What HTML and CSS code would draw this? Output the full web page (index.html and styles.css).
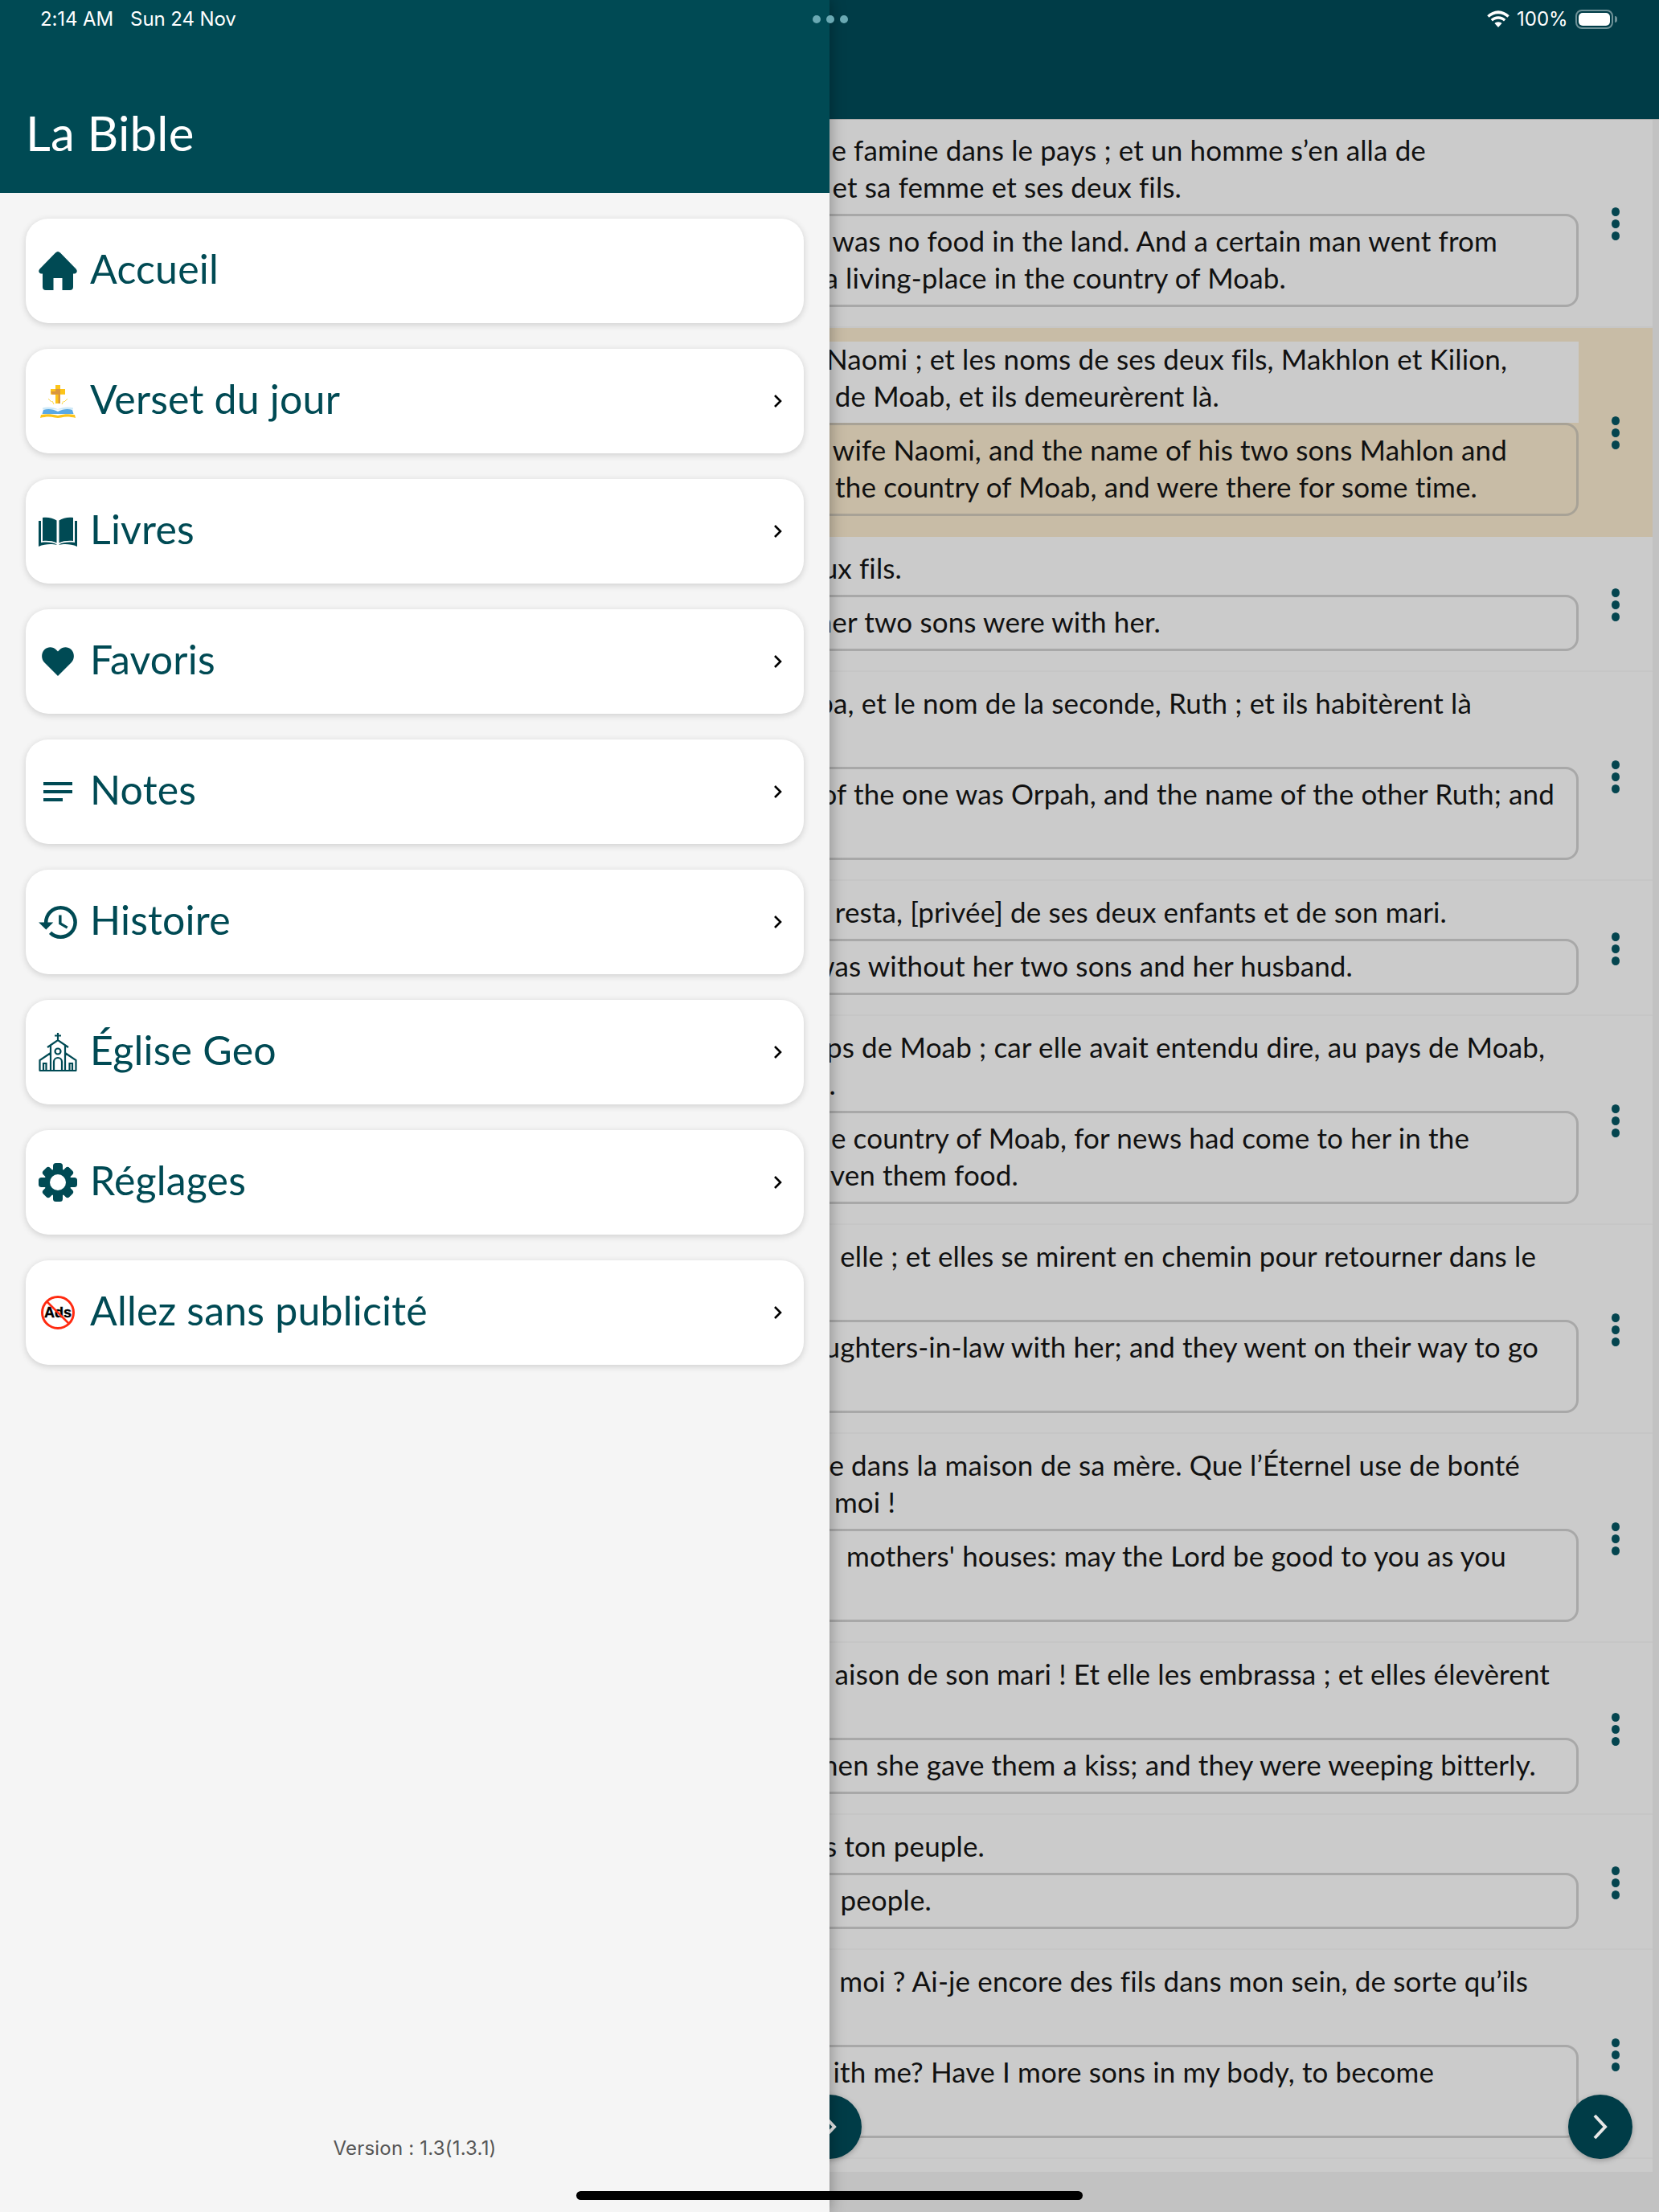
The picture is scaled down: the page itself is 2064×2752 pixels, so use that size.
FILE: index.html
```html
<!DOCTYPE html>
<html lang="fr">
<head>
<meta charset="utf-8">
<title>La Bible</title>
<link rel="stylesheet" href="styles.css">
</head>
<body>
<div class="screen">
  <header class="topbar">
    <div class="status-right">
      <svg class="wifi" viewBox="2 1 24 18"><path d="M14 4.6c3.800 0 7.200 1.500 9.800 3.900l2-2.100C22.400 3.200 18.400 1.200 14 1.200S5.600 3.200 2.200 6.400l2 2.100C6.800 6.100 10.200 4.600 14 4.600z"/><path d="M14 10.200c2.300 0 4.400.9 6 2.400l2-2.100c-2.100-2-4.900-3.300-8-3.300s-5.900 1.300-8 3.300l2 2.100c1.600-1.500 3.700-2.400 6-2.400z"/><path d="M14 13.200c-1.500 0-2.900.6-3.900 1.500L14 19l3.900-4.300c-1-.9-2.400-1.500-3.900-1.500z"/></svg>
      <span class="pct">100%</span>
      <span class="battery"><span class="battery-fill"></span></span>
      <span class="battery-nub"></span>
    </div>
  </header>

  <main class="verses">
    <section class="row"><div class="body">
      <div class="fr"><div class="ln v1a">e famine dans le pays ; et un homme s’en alla de</div><div class="ln v1b">et sa femme et ses deux fils.</div></div>
      <div class="en"><div class="ln v1c">was no food in the land. And a certain man went from</div><div class="ln v1d">a living-place in the country of Moab.</div></div>
    </div><div class="kebab"><i></i><i></i><i></i></div></section>

    <section class="row active"><div class="body">
      <div class="fr"><div class="ln v2a">Naomi ; et les noms de ses deux fils, Makhlon et Kilion,</div><div class="ln v2b">de Moab, et ils demeurèrent là.</div></div>
      <div class="en"><div class="ln v2c">wife Naomi, and the name of his two sons Mahlon and</div><div class="ln v2d">the country of Moab, and were there for some time.</div></div>
    </div><div class="kebab"><i></i><i></i><i></i></div></section>

    <section class="row"><div class="body">
      <div class="fr"><div class="ln v3a">ux fils.</div></div>
      <div class="en"><div class="ln v3c">her two sons were with her.</div></div>
    </div><div class="kebab"><i></i><i></i><i></i></div></section>

    <section class="row"><div class="body">
      <div class="fr"><div class="ln v4a">pa, et le nom de la seconde, Ruth ; et ils habitèrent là</div><div class="ln"></div></div>
      <div class="en"><div class="ln v4c">of the one was Orpah, and the name of the other Ruth; and</div><div class="ln"></div></div>
    </div><div class="kebab"><i></i><i></i><i></i></div></section>

    <section class="row"><div class="body">
      <div class="fr"><div class="ln v5a">resta, [privée] de ses deux enfants et de son mari.</div></div>
      <div class="en"><div class="ln v5c">was without her two sons and her husband.</div></div>
    </div><div class="kebab"><i></i><i></i><i></i></div></section>

    <section class="row"><div class="body">
      <div class="fr"><div class="ln v6a">ps de Moab ; car elle avait entendu dire, au pays de Moab,</div><div class="ln v6b">.</div></div>
      <div class="en"><div class="ln v6c">he country of Moab, for news had come to her in the</div><div class="ln v6d">ven them food.</div></div>
    </div><div class="kebab"><i></i><i></i><i></i></div></section>

    <section class="row"><div class="body">
      <div class="fr"><div class="ln v7a">elle ; et elles se mirent en chemin pour retourner dans le</div><div class="ln"></div></div>
      <div class="en"><div class="ln v7c">ughters-in-law with her; and they went on their way to go</div><div class="ln"></div></div>
    </div><div class="kebab"><i></i><i></i><i></i></div></section>

    <section class="row"><div class="body">
      <div class="fr"><div class="ln v8a">e dans la maison de sa mère. Que l’Éternel use de bonté</div><div class="ln v8b">moi !</div></div>
      <div class="en"><div class="ln v8c">mothers' houses: may the Lord be good to you as you</div><div class="ln"></div></div>
    </div><div class="kebab"><i></i><i></i><i></i></div></section>

    <section class="row"><div class="body">
      <div class="fr"><div class="ln v9a">aison de son mari ! Et elle les embrassa ; et elles élevèrent</div><div class="ln"></div></div>
      <div class="en"><div class="ln v9c">hen she gave them a kiss; and they were weeping bitterly.</div></div>
    </div><div class="kebab"><i></i><i></i><i></i></div></section>

    <section class="row"><div class="body">
      <div class="fr"><div class="ln v10a">s ton peuple.</div></div>
      <div class="en"><div class="ln v10c">people.</div></div>
    </div><div class="kebab"><i></i><i></i><i></i></div></section>

    <section class="row"><div class="body">
      <div class="fr"><div class="ln v11a">moi ? Ai-je encore des fils dans mon sein, de sorte qu’ils</div><div class="ln"></div></div>
      <div class="en"><div class="ln v11c">ith me? Have I more sons in my body, to become</div><div class="ln"></div></div>
    </div><div class="kebab"><i></i><i></i><i></i></div></section>
    <div class="list-end"></div>
  </main>

  <button class="fab fab-prev"><svg viewBox="0 0 24 34"><path d="M5 3l13 14L5 31"/></svg></button>
  <button class="fab fab-next"><svg viewBox="0 0 24 34"><path d="M5 3l13 14L5 31"/></svg></button>

  <aside class="drawer">
    <div class="drawer-head">
      <div class="status-left"><span>2:14 AM</span><span>Sun 24 Nov</span></div>
      <h1 class="drawer-title">La Bible</h1>
    </div>
    <nav class="menu">
      <a class="card">
        <span class="ico"><svg class="i-home" viewBox="0 0 48 48"><path d="M24 0c1 0 2 .5 3 1.500L46.500 21.500c2.500 2.500 1 6-2 6H43V44a4 4 0 0 1-4 4h-9.500V33h-11v15H9a4 4 0 0 1-4-4V27.500H3.500c-3 0-4.500-3.500-2-6L21 1.500C22 .5 23 0 24 0z"/></svg></span>
        <span class="label">Accueil</span>
      </a>
      <a class="card">
        <span class="ico"><svg class="i-verse" viewBox="0 0 44 41">
          <path fill="#fcc419" d="M19 0h6v5h6v6.700h-6V23h-6V11.700h-6V5h6z"/>
          <path fill="#d9963f" d="M19 5h6v18h-2.500V11.700H15L13 8h6z"/>
          <g stroke="#fcd53f" stroke-width="1" fill="none"><path d="M10 17l4 4M15 20l2 4M34 17l-4 4M29 20l-2 4"/></g>
          <path fill="#cfe9f7" d="M3 28.500c6-2 13-1 19 1.500 6-2.500 13-3.500 19-1.500v2H3z"/>
          <path fill="#5aa9e4" d="M4 31c6-2 12-1 18 2 6-3 12-4 18-2l1.500 5H2.500z"/>
          <path fill="#fcc419" d="M1 37c7-1.500 14-1 21 1 7-2 14-2.500 21-1l1 4c-7-2-13-2-18-.5L22 41l-4-.5C13 39 7 39 0 41z"/>
        </svg></span>
        <span class="label">Verset du jour</span>
        <svg class="chev" viewBox="0 0 11 18"><path d="M2 2l7 7-7 7"/></svg>
      </a>
      <a class="card">
        <span class="ico"><svg class="i-book" viewBox="0 0 48 37"><path d="M22.500 4.500C18 1 10 0 5 1v29c6-.5 13 0 17.500 2.500zM25.500 4.500C30 1 38 0 43 1v29c-6-.5-13 0-17.500 2.500z"/><path d="M0 5h3v27c7-1 15-.5 19.500 2.500v.5C17 33.500 8 33.500 0 37zM48 5h-3v27c-7-1-15-.5-19.500 2.500v.5C31 33.500 40 33.500 48 37z"/></svg></span>
        <span class="label">Livres</span>
        <svg class="chev" viewBox="0 0 11 18"><path d="M2 2l7 7-7 7"/></svg>
      </a>
      <a class="card">
        <span class="ico"><svg class="i-heart" viewBox="0 0 40 36"><path d="M20 36L3.500 19.500C-1 15-1 7.500 3.500 3c4.500-4 10.500-3.500 14.500.5l2 2 2-2C26 -.5 32-1 36.500 3c4.500 4.500 4.500 12 0 16.500z"/></svg></span>
        <span class="label">Favoris</span>
        <svg class="chev" viewBox="0 0 11 18"><path d="M2 2l7 7-7 7"/></svg>
      </a>
      <a class="card">
        <span class="ico"><span class="i-notes"><i></i><i></i><i class="short"></i></span></span>
        <span class="label">Notes</span>
        <svg class="chev" viewBox="0 0 11 18"><path d="M2 2l7 7-7 7"/></svg>
      </a>
      <a class="card">
        <span class="ico"><svg class="i-hist" viewBox="1 3 21 18"><path d="M13 3a9 9 0 0 0-9 9H1l3.890 3.890.07.14L9 12H6c0-3.870 3.130-7 7-7s7 3.130 7 7-3.130 7-7 7c-1.930 0-3.680-.79-4.940-2.060l-1.420 1.420A8.954 8.954 0 0 0 13 21a9 9 0 0 0 0-18zm-1 5v5l4.280 2.540.72-1.210-3.500-2.080V8H12z"/></svg></span>
        <span class="label">Histoire</span>
        <svg class="chev" viewBox="0 0 11 18"><path d="M2 2l7 7-7 7"/></svg>
      </a>
      <a class="card">
        <span class="ico"><svg class="i-church" viewBox="0 0 48 48"><path d="M24 0v9M20 3.500h8M11 18L24 9l13 9M15 16v31M33 16v31M15 25L1.500 34v12.500a.5.500 0 0 0 .5.500h44a.5.500 0 0 0 .5-.5V34L33 25M19 47V36a5 5 0 0 1 10 0v11M6 47v-9h3.500v9M38.500 47v-9H42v9"/><circle cx="24" cy="23" r="3.500"/></svg></span>
        <span class="label">Église Geo</span>
        <svg class="chev" viewBox="0 0 11 18"><path d="M2 2l7 7-7 7"/></svg>
      </a>
      <a class="card">
        <span class="ico"><svg class="i-gear" viewBox="0 0 48 48"><g><rect x="18" y="0" width="12" height="48" rx="3.500"/><rect x="0" y="18" width="48" height="12" rx="3.500"/><rect x="18" y="1" width="12" height="46" rx="3.500" transform="rotate(45 24 24)"/><rect x="18" y="1" width="12" height="46" rx="3.500" transform="rotate(-45 24 24)"/><circle cx="24" cy="24" r="17"/></g><circle class="hole" cx="24" cy="24" r="10"/></svg></span>
        <span class="label">Réglages</span>
        <svg class="chev" viewBox="0 0 11 18"><path d="M2 2l7 7-7 7"/></svg>
      </a>
      <a class="card">
        <span class="ico"><svg class="i-ads" viewBox="0 0 42 42"><circle cx="21" cy="21" r="19.500"/><text x="21" y="27" text-anchor="middle">Ads</text><path d="M7 7l28 28"/></svg></span>
        <span class="label">Allez sans publicité</span>
        <svg class="chev" viewBox="0 0 11 18"><path d="M2 2l7 7-7 7"/></svg>
      </a>
    </nav>
    <div class="version">Version : 1.3(1.3.1)</div>
  </aside>

  <div class="multitask"><i></i><i></i><i></i></div>
  <div class="home-bar"></div>
</div>
</body>
</html>
```

FILE: styles.css
```css
* { box-sizing: border-box; }
html, body { margin: 0; padding: 0; }
body { font-family: "Lato", "Liberation Sans", sans-serif; background: #c2c2c2; }
.screen { position: relative; width: 2064px; height: 2752px; overflow: hidden; background: #c2c2c2; }

/* top bar behind the drawer */
.topbar { height: 148px; background: #003c47; display: flex; justify-content: flex-end; align-items: flex-start; box-shadow: 0 1px 0 #a9a9a9; position: relative; }
.status-right { display: flex; align-items: center; height: 47px; padding-right: 52px; color: #fff; font-family: "Inter", "Liberation Sans", sans-serif; font-size: 24px; }
.wifi { width: 28px; height: 21px; fill: #fff; margin-right: 9px; }
.pct { margin-right: 10px; width: 63px; white-space: nowrap; }
.battery { width: 47px; height: 24px; border: 2px solid #6f9298; border-radius: 8px; padding: 2px; display: block; }
.battery-fill { display: block; width: 100%; height: 100%; background: #fff; border-radius: 5px; }
.battery-nub { width: 3px; height: 8px; background: #6f9298; border-radius: 0 3px 3px 0; margin-left: 2px; }

/* verse list */
.verses { width: 2056px; background: #cbcbcb; font-size: 35px; letter-spacing: .14px; color: #111; }
.row { display: flex; align-items: center; box-shadow: inset 0 -2px 0 #c6c6c6; }
.row.active { background: #c8bca6; box-shadow: none; }
.body { width: 1964px; padding: 17px 0 26px 20px; }
.fr { padding-bottom: 9px; background: #cbcbcb; }
.en { border: 3px solid #a8a8a8; border-radius: 16px; padding: 9px 0; }
.active .en { border-color: #a8a296; }
.ln { height: 46px; line-height: 42px; text-align: right; white-space: nowrap; }
.kebab { flex: 1; display: flex; flex-direction: column; align-items: center; gap: 4px; }
.kebab i { display: block; width: 10px; height: 11px; border-radius: 50%; background: #04454f; }
.list-end { height: 16px; }

.v1a { margin-right: 190px; } .v1b { margin-right: 494px; } .v1c { margin-right: 98px; } .v1d { margin-right: 361px; }
.v2a { margin-right: 89px; } .v2b { margin-right: 447px; } .v2c { margin-right: 86px; } .v2d { margin-right: 123px; }
.v3a { margin-right: 842px; } .v3c { margin-right: 517px; }
.v4a { margin-right: 133px; } .v4c { margin-right: 27px; }
.v5a { margin-right: 164px; } .v5c { margin-right: 278px; }
.v6a { margin-right: 42px; } .v6b { margin-right: 924px; } .v6c { margin-right: 133px; } .v6d { margin-right: 694px; }
.v7a { margin-right: 53px; } .v7c { margin-right: 47px; }
.v8a { margin-right: 73px; } .v8b { margin-right: 850px; } .v8c { margin-right: 87px; }
.v9a { margin-right: 36px; } .v9c { margin-right: 50px; }
.v10a { margin-right: 739px; } .v10c { margin-right: 802px; }
.v11a { margin-right: 63px; } .v11c { margin-right: 177px; }

/* floating buttons */
.fab { position: absolute; top: 2606px; width: 80px; height: 80px; padding: 0; border: 0; border-radius: 50%; background: #003c47; box-shadow: 0 2px 6px rgba(0,0,0,.25); display: flex; align-items: center; justify-content: center; }
.fab-prev { left: 992px; }
.fab-next { left: 1951px; }
.fab svg { width: 24px; height: 34px; fill: none; stroke: #e8e8e8; stroke-width: 4; }

/* drawer */
.drawer { position: absolute; left: 0; top: 0; bottom: 0; width: 1032px; background: #f5f5f5; box-shadow: 0 0 18px rgba(0,0,0,.35); display: flex; flex-direction: column; }
.drawer-head { height: 240px; background: #004a54; color: #fff; display: flex; flex-direction: column; justify-content: space-between; padding: 0 0 40px 32px; }
.status-left { display: flex; gap: 21px; height: 47px; align-items: center; margin-left: 18px; font-family: "Inter", "Liberation Sans", sans-serif; font-size: 24px; letter-spacing: -.1px; }
.drawer-title { margin: 0; font-size: 60px; line-height: 70px; font-weight: 400; letter-spacing: .2px; }
.menu { display: flex; flex-direction: column; gap: 32px; padding: 32px 32px 0 32px; flex: 1; }
.card { display: flex; align-items: center; height: 130px; background: #fff; border-radius: 28px; box-shadow: 0 2px 8px rgba(0,0,0,.16); padding: 0 27px 0 16px; color: #004a54; }
.ico { width: 48px; height: 48px; display: flex; align-items: center; justify-content: center; flex: none; }
.label { flex: 1; margin-left: 16px; font-size: 50px; line-height: 60px; padding-bottom: 6px; white-space: nowrap; letter-spacing: .2px; }
.chev { width: 11px; height: 18px; fill: none; stroke: #000; stroke-width: 2.6; flex: none; }
.version { height: 120px; text-align: center; font-family: "Inter", "Liberation Sans", sans-serif; font-size: 24px; letter-spacing: .2px; color: #555; padding-top: 26px; }

/* icons */
.i-home, .i-gear { width: 48px; height: 48px; fill: #004a54; }
.i-gear .hole { fill: #fff; }
.i-verse { width: 44px; height: 41px; }
.i-book { width: 48px; height: 37px; fill: #004a54; }
.i-heart { width: 40px; height: 36px; fill: #004a54; }
.i-hist { width: 48px; height: 41px; fill: #004a54; }
.i-church { width: 48px; height: 48px; fill: none; stroke: #004a54; stroke-width: 2.2; }
.i-ads { width: 42px; height: 42px; }
.i-ads circle { fill: #fff; stroke: #ff2a10; stroke-width: 3; }
.i-ads text { font-family: "Liberation Sans", sans-serif; font-weight: 700; font-size: 18px; fill: #000; stroke: #000; stroke-width: .4; }
.i-ads path { stroke: #ff2a10; stroke-width: 2.500; }
.i-notes { display: flex; flex-direction: column; gap: 6px; width: 36px; }
.i-notes i { display: block; height: 4px; background: #004a54; }
.i-notes .short { width: 24px; }

/* system overlays */
.multitask { position: absolute; top: 19px; left: 1011px; display: flex; gap: 7px; }
.multitask i { display: block; width: 10px; height: 10px; border-radius: 50%; background: #6aa9b3; }
.home-bar { position: absolute; left: 717px; top: 2726px; width: 630px; height: 11px; border-radius: 6px; background: #000; }
```
